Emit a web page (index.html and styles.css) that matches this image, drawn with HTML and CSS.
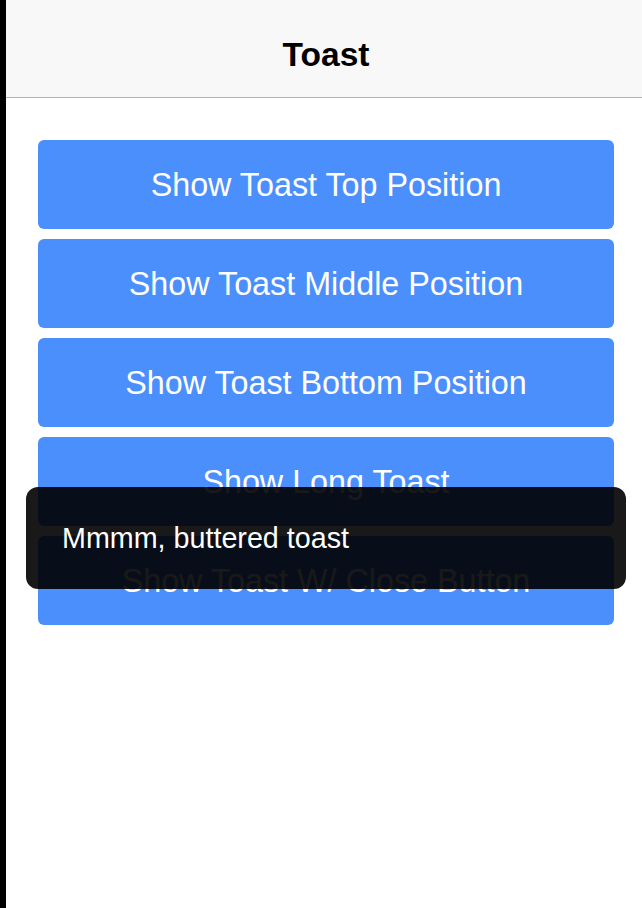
FILE: index.html
```html
<!DOCTYPE html>
<html>
<head>
<meta charset="utf-8">
<title>Toast</title>
<link rel="stylesheet" href="styles.css">
</head>
<body>
<div class="screen">
  <div class="edge"></div>
  <div class="app">
    <header class="bar">
      <h1 class="title">Toast</h1>
    </header>
    <main class="content">
      <button class="btn">Show Toast Top Position</button>
      <button class="btn">Show Toast Middle Position</button>
      <button class="btn">Show Toast Bottom Position</button>
      <button class="btn">Show Long Toast</button>
      <button class="btn">Show Toast W/ Close Button</button>
    </main>
  </div>
  <div class="toast">Mmmm, buttered toast</div>
</div>
</body>
</html>
```

FILE: styles.css
```css
html, body {
  margin: 0;
  padding: 0;
  background: #fff;
}
body {
  font-family: "Liberation Sans", Arial, sans-serif;
}
.screen {
  position: relative;
  display: flex;
  width: 642px;
  height: 908px;
  overflow: hidden;
}
.edge {
  width: 6px;
  flex: none;
  background: #000;
}
.app {
  flex: 1;
  display: flex;
  flex-direction: column;
  background: #fff;
}
.bar {
  box-sizing: border-box;
  height: 98px;
  padding-top: 12px;
  background: #f8f8f8;
  border-bottom: 1px solid #b2b2b2;
  display: flex;
  align-items: center;
  justify-content: center;
  padding-left: 4px;
}
.title {
  margin: 0;
  font-size: 33.5px;
  line-height: 34px;
  font-weight: bold;
  color: #000;
}
.content {
  display: flex;
  flex-direction: column;
  gap: 10px;
  padding: 42px 28px 0 32px;
}
.btn {
  height: 89px;
  border: none;
  border-radius: 6px;
  background: #4b8ffd;
  color: #fff;
  font-family: "Liberation Sans", Arial, sans-serif;
  font-size: 32.3px;
  padding: 2px 0 0 0;
  margin: 0;
}
.toast {
  position: absolute;
  left: 26px;
  top: 487px;
  width: 600px;
  height: 102px;
  box-sizing: border-box;
  padding-left: 36px;
  border-radius: 12px;
  background: rgba(0, 0, 0, 0.9);
  color: #fff;
  font-size: 28.7px;
  display: flex;
  align-items: center;
}
```
